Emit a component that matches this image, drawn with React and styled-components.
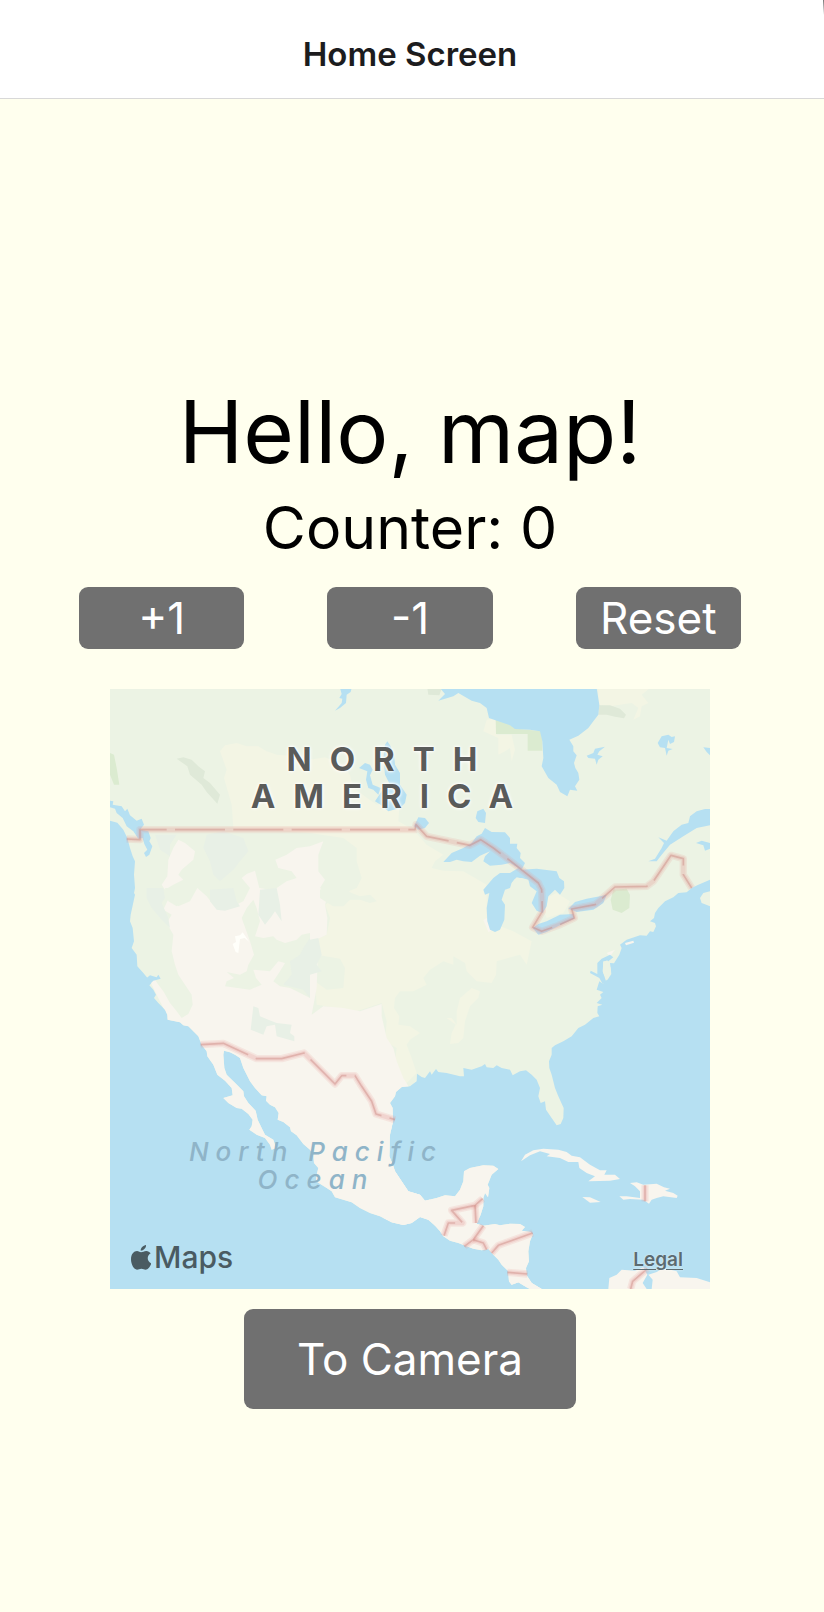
import React, { useState } from "react";
import styled, { createGlobalStyle, css } from "styled-components";

const GlobalStyle = createGlobalStyle`
  * { box-sizing: border-box; }
  body {
    margin: 0;
    background: #ffffee;
    font-family: Inter, "Liberation Sans", sans-serif;
  }
  h1, h2, p { margin: 0; font-weight: 400; }
`;

const Screen = styled.div`
  min-height: 100vh;
  display: flex;
  flex-direction: column;
  background: #ffffee;
`;

const Header = styled.header`
  position: relative;
  display: flex;
  align-items: center;
  justify-content: center;
  height: 99px;
  padding: 10px 4px 0 0;
  background: #fff;
  border-bottom: 1px solid #d8d8d8;

  &::after {
    content: "";
    position: absolute;
    top: 0;
    right: 0;
    width: 1px;
    height: 15px;
    background: linear-gradient(#777, #fff);
  }
`;

const Title = styled.h1`
  && { font-weight: 600; }
  font-size: 33px;
  line-height: 40px;
  color: #1c1c1e;
`;

const Main = styled.main`
  flex: 1;
  display: flex;
  flex-direction: column;
  align-items: center;
  padding: 276px 4px 40px 0;
  color: #000;
`;

const Greeting = styled.h2`
  font-size: 87px;
  line-height: 114px;
`;

const Counter = styled.p`
  font-size: 59px;
  line-height: 78px;
`;

const ButtonRow = styled.div`
  display: flex;
  gap: 83px;
  width: 100%;
  padding: 0 79px;
  margin: 20px 0 40px;
`;

const Button = styled.button`
  border: 0;
  border-radius: 9px;
  padding: 0;
  background: #707070;
  color: #fff;
  font-family: inherit;
  font-size: 44px;
  line-height: 60px;
  cursor: pointer;
  ${(p) =>
    p.$large
      ? css`
          width: 332px;
          height: 100px;
          margin-top: 20px;
        `
      : css`
          flex: 1 1 0;
          min-width: 0;
          height: 62px;
        `}
`;

const MapFrame = styled.section`
  position: relative;
  width: 600px;
  max-width: 100%;
  aspect-ratio: 1;
  overflow: hidden;
  background: #b6e0f2;
`;

const MapArt = styled.svg`
  display: block;
  width: 100%;
  height: 100%;
`;

const RegionLabel = styled.p`
  position: absolute;
  text-align: center;
  white-space: pre-line;
  ${(p) =>
    p.$ocean
      ? css`
          left: 54px;
          top: 449px;
          width: 304px;
          font-size: 26px;
          line-height: 28px;
          && { font-weight: 500; }
          font-style: italic;
          letter-spacing: 7px;
          color: #8fb4c8;
        `
      : css`
          left: 100px;
          top: 52px;
          width: 362px;
          font-size: 33px;
          line-height: 37px;
          && { font-weight: 700; }
          letter-spacing: 18px;
          color: #5a5b5a;
          text-shadow: 0 0 2px #fff, 0 0 3px #fff, 0 0 4px #fff;
        `}
`;

const Attribution = styled.div`
  position: absolute;
  left: 21px;
  bottom: 13px;
  display: flex;
  align-items: center;
  gap: 3px;
  font-size: 30px;
  font-weight: 500;
  line-height: 38px;
  color: #4a5b62;
`;

const Legal = styled.a`
  position: absolute;
  right: 27px;
  bottom: 17px;
  font-size: 19px;
  font-weight: 600;
  line-height: 24px;
  color: #5c6b71;
  text-decoration: underline;
  text-underline-offset: 3px;
  text-shadow: 0 0 2px #ffffffaa;
`;

const LAND =
  "0,0 0,398 22,404 40,425 52,450 60,480 68,505 75,520 72,560 75,600 72,615 75,620 62,680 60,700 68,720 72,760 65,780 80,800 82,835 100,855 115,873 125,885 118,892 130,905 138,920 132,930 145,945 165,965 172,980 173,995 210,1003 220,1012 235,1015 250,1030 265,1045 275,1070 290,1090 292,1105 310,1130 322,1160 345,1178 365,1200 368,1222 340,1230 355,1245 380,1260 395,1262 415,1278 428,1295 425,1315 418,1325 440,1340 465,1350 480,1370 485,1385 498,1380 490,1355 465,1340 455,1320 443,1295 437,1268 415,1245 402,1225 400,1210 388,1198 370,1180 350,1160 343,1140 340,1100 342,1088 360,1093 375,1100 390,1110 400,1140 420,1180 435,1200 455,1222 470,1225 468,1238 480,1250 495,1258 506,1275 503,1295 520,1302 540,1318 543,1330 560,1342 580,1368 600,1385 610,1400 612,1425 625,1440 620,1460 618,1480 650,1500 665,1510 675,1528 690,1532 725,1543 750,1560 780,1575 810,1585 845,1603 880,1611 905,1605 930,1587 955,1595 975,1613 990,1630 1000,1645 1020,1658 1045,1665 1070,1675 1090,1682 1115,1687 1135,1683 1150,1700 1165,1715 1175,1730 1195,1750 1197,1780 1205,1790 1225,1783 1250,1798 1260,1803 1295,1803 1265,1785 1250,1762 1248,1740 1257,1720 1255,1690 1260,1660 1268,1640 1262,1632 1235,1628 1245,1617 1230,1608 1200,1607 1170,1612 1155,1608 1130,1612 1120,1613 1100,1607 1112,1580 1120,1555 1120,1530 1125,1515 1134,1528 1138,1500 1133,1490 1145,1460 1165,1443 1150,1433 1120,1432 1080,1440 1062,1450 1060,1480 1050,1505 1035,1525 1005,1522 980,1530 945,1538 930,1520 895,1510 875,1480 855,1450 850,1435 838,1405 840,1340 848,1305 848,1260 840,1245 855,1225 858,1212 875,1197 900,1195 920,1180 921,1157 935,1167 945,1170 960,1150 965,1160 978,1143 985,1152 1010,1155 1050,1165 1062,1165 1060,1140 1085,1145 1115,1135 1125,1128 1130,1138 1150,1140 1160,1132 1175,1140 1200,1145 1208,1162 1230,1150 1248,1147 1265,1160 1280,1175 1290,1200 1285,1225 1292,1245 1305,1240 1308,1265 1325,1290 1340,1312 1352,1308 1360,1290 1361,1260 1345,1225 1335,1200 1325,1160 1318,1140 1317,1120 1325,1100 1325,1080 1335,1072 1360,1060 1385,1045 1405,1020 1425,1010 1450,990 1468,985 1462,975 1463,955 1477,950 1460,945 1475,930 1470,920 1480,912 1460,905 1468,880 1480,888 1495,870 1503,850 1500,825 1512,826 1528,800 1535,780 1530,770 1550,755 1590,742 1610,743 1620,730 1630,732 1638,715 1635,705 1620,700 1632,690 1635,675 1645,660 1665,640 1690,628 1705,615 1730,613 1745,600 1765,590 1800,575 1800,0";

const DESERT = [
  "175,515 190,480 205,455 225,465 255,490 250,515 215,545 205,560 220,575 190,590 165,605 155,590 172,565",
  "160,665 172,640 185,620 205,655 240,640 262,600 290,625 310,650 330,667 370,655 400,640 420,600 395,570 410,558 435,548 448,600 480,605 500,600 530,580 560,570 545,550 505,540 496,515 530,500 560,480 600,475 640,460 625,500 625,550 645,575 630,600 655,620 645,650 652,690 650,740 625,752 620,900 605,980 640,955 700,960 750,970 815,948 815,985 830,1050 850,1080 860,1120 880,1170 960,1300 960,1700 1400,1803 1100,1803 300,1600 100,1010 170,980 120,880 128,865 145,890 160,910 180,945 200,970 215,990 235,978 248,950 245,920 225,890 205,860 195,830 185,790 190,740 170,705 185,680",
  "850,1240 1300,1380 1300,1803 800,1803",
  "1120,696 1130,690 1145,728 1135,732",
  "1490,795 1515,785 1500,805",
];

const PLAINS = [
  "330,190 345,172 380,165 410,175 445,175 470,190 500,200 560,205 600,215 645,208 680,222 700,230 720,262 730,300 800,350 870,330 865,400 910,425 950,470 1000,500 975,520 965,540 1000,548 1060,550 1130,590 1130,700 1210,730 1265,760 1250,830 1230,800 1160,820 1158,860 1145,885 1100,880 1070,850 1065,825 1030,805 1030,830 1000,820 960,845 940,870 950,890 910,910 870,910 855,930 852,960 868,985 865,1010 900,1015 930,1035 900,1055 890,1070 905,1110 920,1155 870,1205 835,1190 855,1120 860,1080 825,1060 830,1000 815,945 740,970 620,950 615,880 650,905 700,900 705,840 690,812 620,800 625,752 650,740 660,690 645,650 690,620 740,600 755,570 740,520 740,480 700,450 600,435 370,420 365,350 342,270 350,245",
  "1085,900 1110,910 1105,930 1080,955 1065,1000 1060,1050 1045,1065 1020,1068 1025,1035 1037,1010 1010,990 1025,990 1040,1010 1040,970 1050,930",
  "1130,95 1158,90 1160,140 1205,140 1215,185 1205,220 1200,180 1185,190 1165,200 1165,150 1120,130",
  "1465,0 1620,0 1595,20 1615,45 1595,55 1590,85 1570,95 1585,60 1565,45 1500,55 1465,50",
  "1290,640 1340,615 1380,640 1360,675 1310,690",
];

const GREEN = [
  "630,605 665,590 700,600 725,615 750,625 780,620 800,640 780,645 750,635 720,635 700,655 670,655 645,640 630,630",
  "395,690 410,660 430,635 440,660 450,700 435,745 460,750 490,745 500,755 525,765 560,755 575,740 600,735 600,930 560,910 540,900 510,895 490,880 510,850 525,825 505,820 480,850 430,845 438,870 455,890 420,905 345,895 350,880 372,870 350,852 390,860 410,850 415,830 432,800 420,760",
  "165,600 230,600 240,635 200,655 175,640",
];

const FOREST = [
  "110,600 160,600 165,630 155,645 175,690 180,720 155,695 125,660 110,630",
  "300,605 370,600 380,640 390,655 345,668 320,665 300,640",
  "450,605 500,600 510,650 515,700 495,670 485,685 465,710 445,680",
  "430,955 445,960 450,985 475,995 500,1005 545,1010 540,1035 553,1045 553,1060 500,1045 495,1010 470,1015 460,1040 422,1025",
  "290,440 340,430 400,450 415,490 390,520 370,545 330,580 310,560 300,520 280,480",
  "540,820 570,800 580,780 600,750 600,930 580,905 520,890 545,860",
  "600,755 625,750 635,800 620,830 635,850 600,860",
  "135,440 200,440 180,470 180,505 150,485",
];

const PARKS = [
  ["#dbebd0", "0,195 12,200 20,240 28,290 12,290 0,260"],
  ["#dfe9d8", "200,212 220,208 245,215 265,235 285,250 280,270 300,285 330,320 322,347 290,312 275,290 240,260 232,235"],
  ["#dfe9d8", "952,0 996,0 988,22 955,20"],
  ["#dbebd0", "1157,92 1185,100 1230,123 1297,130 1297,188 1253,188 1253,138 1158,138"],
  ["#dfe9d8", "1468,52 1500,52 1530,62 1548,80 1542,91 1515,86 1490,80 1465,80"],
  ["#dbebd0", "1510,605 1550,602 1560,620 1558,660 1535,675 1508,665 1502,635"],
  ["#fffffa", "368,768 378,762 375,745 390,742 398,733 418,762 404,750 390,753 385,795 377,792"],
];

const LAKES = [
  "990,0 1005,18 985,38 1030,25 1045,15 1085,38 1110,45 1130,60 1137,90 1165,100 1200,112 1215,123 1260,125 1290,130 1297,160 1300,210 1295,235 1315,270 1340,290 1350,312 1372,325 1380,305 1402,308 1395,295 1408,275 1405,255 1396,240 1392,225 1400,202 1390,190 1390,175 1378,155 1405,143 1435,120 1450,100 1465,80 1468,50 1460,0",
  "690,0 725,0 722,12 710,20 708,45 690,60 675,68 695,45 697,32 688,30 695,18",
  "747,240 765,225 780,230 788,245 780,262 788,290 812,300 805,320 790,305 775,300 768,275 772,250",
  "825,170 832,160 842,175 852,200 855,230 870,255 870,290 890,320 885,345 870,360 835,370 812,350 795,340 815,310 845,300 825,260 820,210",
  "912,415 925,388 945,390 957,405 945,420 925,425",
  "1097,390 1102,370 1120,362 1128,375 1125,405 1105,402",
  "1000,522 1025,495 1060,480 1085,465 1100,445 1115,437 1125,420 1145,432 1185,433 1200,450 1200,467 1222,467 1220,480 1232,495 1230,510 1245,525 1235,545 1280,542 1340,550 1348,570 1362,580 1363,600 1350,620 1335,605 1315,625 1310,655 1298,675 1280,668 1265,645 1280,610 1260,595 1255,575 1235,570 1215,572 1205,585 1200,600 1185,605 1175,635 1185,650 1183,695 1170,725 1155,732 1140,725 1132,700 1130,660 1138,615 1125,620 1120,605 1150,570 1170,555 1200,555 1225,540 1200,525 1175,530 1140,533 1120,520 1125,505 1140,490 1110,503 1085,522 1060,520 1040,515 1020,522",
  "1268,720 1285,708 1310,700 1350,680 1390,678 1393,692 1350,712 1310,732 1285,740",
  "1375,662 1395,642 1430,632 1470,625 1490,620 1480,645 1450,665 1400,672",
  "1615,520 1635,512 1655,480 1662,465 1645,448 1670,458 1690,430 1715,410 1735,405 1740,385 1760,370 1785,363 1800,363 1800,412 1760,420 1720,445 1680,470 1655,500 1640,520",
  "1758,465 1775,458 1800,465 1800,482 1785,488 1780,472",
  "1430,203 1450,195 1455,182 1485,176 1468,190 1462,200 1478,205 1465,215 1460,230 1455,212 1435,210",
  "1643,165 1655,145 1675,140 1685,147 1695,145 1692,162 1680,168 1675,155 1670,180 1688,183 1675,188 1670,203 1665,180 1650,178",
  "1780,178 1800,180 1800,202 1790,192",
  "1462,825 1475,812 1500,800 1510,808 1495,820 1480,820 1478,850 1490,885 1478,888 1468,870 1440,855 1442,848 1462,858",
  "0,338 10,340 8,350 35,355 45,370 52,362 60,382 80,398 95,392 102,410 90,425 115,430 122,450 118,460 127,475 118,500 108,507 102,495 112,485 103,468 98,450 85,452 70,430 50,415 38,390 20,375 15,362 0,358",
  "110,870 120,862 140,868 145,860 152,872 130,878 120,888",
];

const ISLANDS = [
  "1233,1420 1245,1400 1270,1387 1300,1382 1345,1385 1370,1392 1385,1403 1410,1408 1440,1430 1470,1447 1490,1447 1483,1460 1515,1460 1530,1473 1500,1478 1435,1480 1455,1465 1430,1455 1408,1440 1405,1422 1375,1422 1350,1410 1310,1405 1320,1398 1290,1390 1260,1402",
  "1417,1527 1440,1528 1472,1542 1440,1544",
  "1560,1485 1580,1483 1600,1490 1640,1487 1662,1498 1680,1502 1665,1508 1690,1515 1703,1523 1700,1530 1660,1525 1640,1530 1625,1535 1617,1547 1600,1535 1560,1533 1540,1535 1528,1525 1550,1525 1590,1530 1590,1510 1575,1495",
  "1495,1803 1498,1770 1520,1760 1535,1745 1575,1748 1600,1738 1612,1760 1598,1785 1610,1803",
  "1625,1803 1628,1775 1615,1760 1640,1752 1660,1740 1700,1750 1710,1768 1760,1770 1800,1783 1800,1803",
  "1545,765 1570,758 1572,764 1548,772",
];

const BORDERS = [
  "50,453 90,455 90,425 915,425 918,410 950,445 1080,472 1112,455 1150,480 1200,518 1285,585 1295,605 1297,670 1268,718 1295,730 1345,712 1393,690 1385,663 1455,650 1515,597 1610,595 1630,580 1683,502 1720,512 1720,560 1745,600",
  "272,1070 340,1066 440,1112 515,1112 582,1095 675,1188 695,1163 735,1163 755,1195 785,1240 798,1278 855,1295",
  "1118,1532 1095,1552 1025,1567 1058,1605 1015,1605 1002,1643",
  "1095,1552 1098,1605",
  "1120,1613 1090,1655 1063,1675",
  "1090,1655 1120,1665 1130,1685",
  "1145,1695 1165,1672 1268,1635",
  "1192,1753 1252,1758",
  "1605,1492 1605,1540",
  "1612,1742 1568,1780 1562,1803",
];

const polygons = (list, fill) =>
  list.map((points) => <polygon key={points} points={points} fill={fill} />);

function NorthAmericaMap() {
  return (
    <MapArt viewBox="0 3 1800 1800" role="img" aria-label="Map of North America">
      <defs>
        <clipPath id="land">
          <polygon points={LAND} />
        </clipPath>
      </defs>
      <polygon points={LAND} fill="#ecf3e4" />
      <g clipPath="url(#land)">
        {polygons(PLAINS, "#f3f5e4")}
        {polygons(DESERT, "#f8f5ee")}
        {polygons(GREEN, "#ecf3e4")}
        {polygons(FOREST, "#e8f0e6")}
        {PARKS.map(([fill, points]) => (
          <polygon key={points} points={points} fill={fill} />
        ))}
      </g>
      {polygons(LAKES, "#b6e0f2")}
      {polygons(ISLANDS, "#f8f5ee")}
      <polygon points="1205,585 1220,568 1240,572 1255,580 1250,600 1205,605" fill="#ecf3e4" />
      <polygon points="1770,630 1780,615 1800,610 1800,655 1775,645" fill="#ecf3e4" />
      <polygon points="1480,822 1492,817 1502,840 1504,858 1492,876 1480,855" fill="#ecf3e4" />
      <g fill="none" strokeLinejoin="round">
        {BORDERS.map((points) => (
          <React.Fragment key={points}>
            <polyline points={points} stroke="#e59a94" strokeOpacity="0.17" strokeWidth="22" />
            <polyline points={points} stroke="#e59a94" strokeOpacity="0.22" strokeWidth="13" />
            <polyline
              points={points}
              stroke="#c9827c"
              strokeOpacity="0.42"
              strokeWidth="5"
              strokeDasharray="150 25"
            />
          </React.Fragment>
        ))}
      </g>
    </MapArt>
  );
}

function AppleMark() {
  return (
    <svg width="20" height="25" viewBox="0 0 60 75" fill="currentColor" aria-hidden="true">
      <path d="M45 0c1 8-7 17-16 17C28 9 37 1 45 0Z" />
      <path d="M30 22c5 0 9-4 16-4 5 0 10 3 13 7-13 8-11 25 2 30-3 9-10 19-17 19-5 0-7-3-13-3s-8 3-13 3C9 74 0 59 0 43c0-16 9-25 18-25 5 0 9 4 12 4Z" />
    </svg>
  );
}

export default function App() {
  const [count, setCount] = useState(0);

  return (
    <>
      <GlobalStyle />
      <Screen>
        <Header>
          <Title>Home Screen</Title>
        </Header>
        <Main>
          <Greeting>Hello, map!</Greeting>
          <Counter>Counter: {count}</Counter>
          <ButtonRow>
            <Button onClick={() => setCount(count + 1)}>+1</Button>
            <Button onClick={() => setCount(count - 1)}>-1</Button>
            <Button onClick={() => setCount(0)}>Reset</Button>
          </ButtonRow>
          <MapFrame>
            <NorthAmericaMap />
            <RegionLabel>{"NORTH\nAMERICA"}</RegionLabel>
            <RegionLabel $ocean>{"North Pacific\nOcean"}</RegionLabel>
            <Attribution>
              <AppleMark />
              <span>Maps</span>
            </Attribution>
            <Legal href="#legal">Legal</Legal>
          </MapFrame>
          <Button $large>To Camera</Button>
        </Main>
      </Screen>
    </>
  );
}
